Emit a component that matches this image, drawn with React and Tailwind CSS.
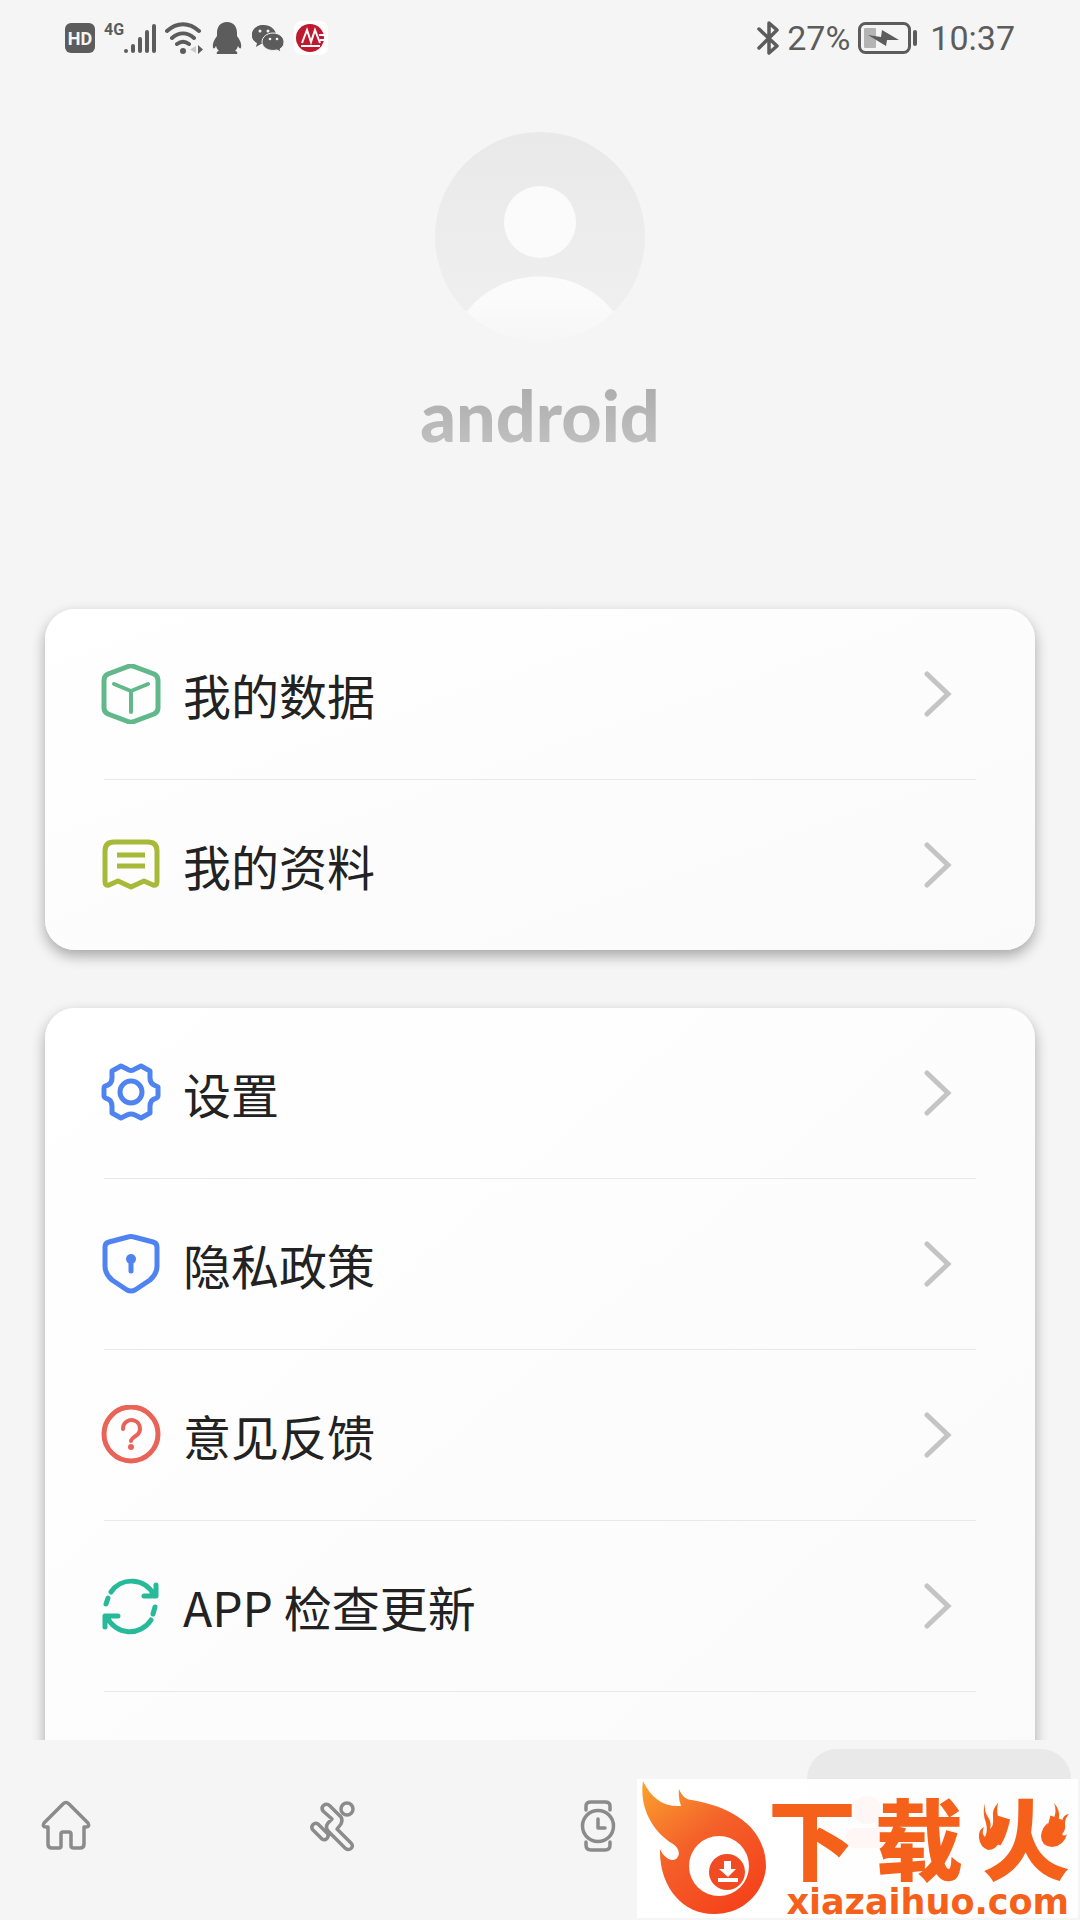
const FONT = "font-['Noto_Sans_CJK_SC',sans-serif]";

function StatusBar() {
  return (
    <header className="flex h-[76px] shrink-0 items-center justify-between px-[65px] text-[#5c5c5c]">
      <div className="flex items-center gap-[9px]">
        <span className="flex h-[30px] w-[30px] items-center justify-center rounded-md bg-[#5c5c5c] font-['Roboto',sans-serif] text-[18px] font-bold text-[#f5f5f5]">HD</span>
        <span className="flex items-center">
          <span className="mb-4 font-['Roboto',sans-serif] text-[16px] leading-4 font-bold">4G</span>
          <svg width="32" height="32" viewBox="1 0 32 32" stroke="currentColor" strokeWidth="4" strokeLinecap="round" aria-hidden="true">
            <path d="M3 29V29M10 29V24M17 29V17M24 29V10M31 29V4" />
          </svg>
        </span>
        <svg width="38" height="34" viewBox="0 0 38 34" fill="none" stroke="currentColor" strokeWidth="4" strokeLinecap="round" aria-hidden="true">
          <path d="M2 10C12 1 24 1 34 10M7 17C14 11 22 11 29 17M12 23C16 20 20 20 24 23" />
          <circle cx="18" cy="30" r="3" fill="currentColor" stroke="none" />
          <path d="M31 25v7l-6-3.500z" fill="#c9c9c9" stroke="none" />
          <path d="M33 24v9l5-4.500z" fill="currentColor" stroke="none" />
        </svg>
        <svg width="30" height="34" viewBox="0 0 30 34" fill="currentColor" aria-hidden="true">
          <path d="M15 1C8 1 5 6 5 12v3C2 19 0 23 1 27c1 1 2 0 3-2 1 3 2 4 3 5-2 0-3 2-2 3h20c1-1 0-3-2-3 1-1 2-2 3-5 1 2 2 3 3 2 1-4-1-8-4-12v-3C25 6 22 1 15 1z" />
        </svg>
        <svg width="34" height="30" viewBox="0 0 34 30" aria-hidden="true">
          <path d="M13 2C6 2 1 6 1 12c0 3 1 6 5 8l-1 4 5-3h4z" fill="currentColor" />
          <path d="M13 2c6 0 11 4 12 9L14 21C6 21 1 18 1 12 1 6 6 2 13 2z" fill="currentColor" />
          <path d="M22 10c6 0 11 4 11 9 0 3-1 5-4 7l1 3-4-2c-9 2-15-3-15-8s5-9 11-9z" fill="currentColor" stroke="#f5f5f5" strokeWidth="1" />
          <g fill="#f5f5f5"><circle cx="9" cy="8" r="1.500" /><circle cx="17" cy="8" r="1.500" /><circle cx="19" cy="16" r="1.300" /><circle cx="26" cy="16" r="1.300" /></g>
        </svg>
        <svg width="34" height="34" viewBox="0 0 34 34" aria-hidden="true">
          <rect width="34" height="34" rx="8" fill="#fff" />
          <circle cx="16" cy="17" r="14" fill="#c0182f" />
          <path d="M8 22L13 9l4 12 4-12 5 13M7 25h19M25 14h7M26 19h6" fill="none" stroke="#fff" strokeWidth="2" />
        </svg>
      </div>
      <div className="flex items-center font-['Roboto',sans-serif] text-[34px] leading-10">
        <svg width="22" height="36" viewBox="1 0 22 36" fill="none" stroke="currentColor" strokeWidth="3.500" strokeLinejoin="round" strokeLinecap="round" aria-hidden="true">
          <path d="M3 9l18 17-8 7V3l8 7L3 28" />
        </svg>
        <span className="ml-2">27%</span>
        <svg className="ml-2" width="60" height="32" viewBox="0 0 60 32" aria-hidden="true">
          <rect x="1.500" y="1.500" width="50" height="29" rx="6" fill="none" stroke="currentColor" strokeWidth="3" />
          <rect x="6" y="6" width="12" height="20" rx="1" fill="#b4b4b4" />
          <path d="M10 13L23 15 24 8 41 18 29 18 28 24z" fill="currentColor" />
          <rect x="55" y="8" width="4" height="16" rx="2" fill="currentColor" />
        </svg>
        <time className="ml-3">10:37</time>
      </div>
    </header>
  );
}

function Avatar() {
  return (
    <svg width="212" height="212" viewBox="0 0 212 212" role="img" aria-label="avatar">
      <defs>
        <clipPath id="face"><circle cx="106" cy="106" r="105" /></clipPath>
        <linearGradient id="disc" x1="0" y1="0" x2="0" y2="1"><stop stopColor="#e9e9e9" /><stop offset="1" stopColor="#f0f0f0" /></linearGradient>
        <linearGradient id="body" x1="0" y1="0" x2="0" y2="1"><stop offset="0.300" stopColor="#fbfbfb" /><stop offset="1" stopColor="#f6f6f6" /></linearGradient>
      </defs>
      <g clipPath="url(#face)">
        <rect width="212" height="212" fill="url(#disc)" />
        <circle cx="106" cy="91" r="36" fill="#fbfbfb" />
        <path d="M25 192C60 130 152 130 187 192V212H25z" fill="url(#body)" />
      </g>
    </svg>
  );
}

const line = { fill: "none", strokeWidth: 5, strokeLinecap: "round", strokeLinejoin: "round" };
const navLine = { ...line, strokeWidth: 3.5, stroke: "currentColor" };

const icons = {
  box: (
    <g {...line} stroke="#60b88b">
      <path d="M27 2.500Q30 1 33 2.500L53 10Q57 12 57 16V44Q57 48 53 50L33 57.500Q30 59 27 57.500L7 50Q3 48 3 44V16Q3 12 7 10z" />
      <path d="M13 20l17 7 17-7M30 27v21" strokeWidth="4" />
    </g>
  ),
  note: (
    <g {...line} stroke="#a6b938">
      <path d="M4 16Q4 7 13 7H47Q56 7 56 16V47Q56 51 52 50L43 46 30 52 17 46 8 50Q4 51 4 47z" />
      <path d="M16 20h28M16 31h28" strokeLinecap="butt" />
    </g>
  ),
  gear: (
    <g {...line} stroke="#4f83f1">
      <path d="M20 3L26 6Q30 9 34 6L40 3 49 8V15Q49 20 53 22L57 24V33Q57 35 53 36 49 38 49 43V50L40 55 34 52Q30 50 26 52L20 55 11 50V43Q11 38 7 36 3 35 3 33V25Q3 23 7 22 11 20 11 15V8z" />
      <circle cx="30" cy="29" r="11" />
    </g>
  ),
  shield: (
    <g {...line} stroke="#4f83f1">
      <path d="M27 3Q30 2 33 3L52 8Q56 9 56 13V32Q56 40 49 46L34 56Q30 58 26 56L11 46Q4 40 4 32V13Q4 9 8 8z" />
      <circle cx="30" cy="25" r="5" fill="#4f83f1" stroke="none" />
      <path d="M30 26v11" />
    </g>
  ),
  question: (
    <g {...line} stroke="#e96357">
      <circle cx="30" cy="29" r="27" />
      <path d="M22 24a8.500 8.500 0 1 1 14 6Q30 34 30 36" strokeWidth="4" />
      <circle cx="30" cy="42" r="3" fill="#e96357" stroke="none" />
    </g>
  ),
  refresh: (
    <g {...line} stroke="#26ba9a">
      <path d="M10 16A25 25 0 0 1 53 19M43 20H55V9M50 44A25 25 0 0 1 6 41M17 40H4V51M7 22l-2 6M54 31l-2 7" />
    </g>
  ),
};

function Row({ icon, label }) {
  return (
    <li className="mx-[59px] border-b border-[#e9e9e9] last:border-b-0">
      <button type="button" className="flex h-[170px] w-full items-center pr-6 text-left">
        <svg width="60" height="60" viewBox="0 0 60 60" className="-ml-[3px] shrink-0" aria-hidden="true">{icons[icon]}</svg>
        <span className="ml-[22px] flex-1 text-[48px] leading-[64px] text-[#222]">{label}</span>
        <svg width="28" height="46" viewBox="0 0 28 46" fill="none" stroke="#c4c4c4" strokeWidth="5" strokeLinecap="round" aria-hidden="true"><path d="M3 3l21 20L3 43" /></svg>
      </button>
    </li>
  );
}

function Card({ children }) {
  return <ul className="rounded-[30px] bg-linear-to-br from-white to-[#fafafa] shadow-[0_6px_14px_rgba(0,0,0,0.32)]">{children}</ul>;
}

function Watermark() {
  return (
    <aside className="absolute right-[2px] bottom-[2px] h-[139px] w-[441px] bg-white/95 text-[#f5611a]">
      <svg className="absolute top-0 left-0" width="132" height="139" viewBox="0 0 132 139" aria-hidden="true">
        <defs>
          <linearGradient id="flame" x1="0" y1="0" x2="0.700" y2="1"><stop stopColor="#fba32e" /><stop offset="0.500" stopColor="#f4602a" /><stop offset="1" stopColor="#f5431b" /></linearGradient>
        </defs>
        <path d="M6 2C14 19 26 28 44 27Q41 19 42 10C45 17 49 21 55 21C95 28 129 48 129 88C127 114 106 135 78 135C47 136 22 109 23 70C27 79 34 83 39 80C44 76 42 69 36 65C16 53 2 29 6 2z" fill="url(#flame)" />
        <circle cx="82" cy="87" r="30" fill="#fff" />
        <circle cx="90" cy="93" r="18" fill="#f04b23" />
        <path d="M87 82h7v8h5l-8 8-9-8h5zM81 99h20v4H81z" fill="#fff" />
      </svg>
      <div className="ml-[131px] flex items-center justify-between pt-3 pr-2 text-[88px] leading-[88px] font-black">
        <span>下</span><span>载</span><span>火</span>
      </div>
      <svg className="absolute top-6 right-2" width="92" height="52" viewBox="0 0 92 52" fill="currentColor" aria-hidden="true">
        <path d="M7 0Q6 9 10 14 14 20 12 26 16 23 15 14 14 6 20 0 18 9 21 17 26 28 22 38 18 47 10 47 2 44 1 35 0 27 6 24 3 31 7 34 10 28 8 20 4 10 7 0z" />
        <path d="M76 0Q82 7 81 14 81 19 78 25 82 25 84 18 85 12 91 11 87 15 87 21 88 27 84 31 86 34 89 31 86 43 74 44 63 43 63 33 64 24 70 20 69 27 73 27 72 21 76 15 79 8 76 0z" />
      </svg>
      <p className="absolute right-[9px] bottom-0 font-['DejaVu_Sans',sans-serif] text-[35px] leading-8 font-bold">xiazaihuo.com</p>
    </aside>
  );
}

function NavBar() {
  return (
    <nav className="relative grid h-[180px] shrink-0 grid-cols-[266fr_266fr_241fr_264fr] items-start bg-[#f5f5f5] pr-[9px] pl-[34px] text-[#8b8b8b]">
      <button type="button" aria-label="首页" className="mt-[54px] h-16 w-16">
        <svg width="64" height="64" viewBox="0 0 64 64" {...navLine}><path d="M29 10Q32 7 35 10L54 29Q56 33 52 33H50V50Q50 54 46 54H40Q37 54 37 52V40Q37 38 35 38H29Q27 38 27 40V52Q27 54 25 54H18Q14 54 14 50V33H12Q8 33 10 29z" /></svg>
      </button>
      <button type="button" aria-label="运动" className="mt-[54px] h-16 w-16">
        <svg width="64" height="64" viewBox="0 0 64 64" {...navLine}><circle cx="47" cy="15" r="6" /><path d="M23 17C20 12 26 8 30 12L41 23Q43 26 41 30L37 35 51 49C55 53 49 58 45 54L28 37Q25 33 28 29L32 25zM12.500 35.500A4 4 0 0 1 18 30L27.500 39.500A4 4 0 0 1 22 45z" /></svg>
      </button>
      <button type="button" aria-label="设备" className="mt-[54px] h-16 w-16">
        <svg width="64" height="64" viewBox="0 0 64 64" {...navLine}><circle cx="32" cy="32" r="15.500" /><path d="M20 16V12Q20 8 25 8H39Q44 8 44 12V16M20 48V51Q20 56 25 56H39Q44 56 44 51V48M32 25V34H39" /></svg>
      </button>
      <button type="button" aria-label="我的" className="mt-[9px] h-[150px] rounded-[30px] bg-[#e9e9e9]">
        <svg className="ml-9" width="48" height="60" viewBox="0 0 48 60" fill="#ee5a4c" aria-hidden="true"><circle cx="24" cy="16" r="14" /><rect x="2" y="34" width="44" height="20" rx="10" /></svg>
      </button>
      <Watermark />
    </nav>
  );
}

export default function App() {
  return (
    <div className={`flex h-screen flex-col overflow-hidden bg-[#f5f5f5] ${FONT}`}>
      <StatusBar />
      <main className="min-h-0 flex-1 overflow-hidden">
        <section className="flex h-[533px] flex-col items-center pt-[55px]">
          <Avatar />
          <h1 className="mt-[30px] bg-linear-to-b from-[#a8a8a8] to-[#c4c4c4] bg-clip-text font-['Lato',sans-serif] text-[70px] leading-[84px] font-black text-transparent">android</h1>
        </section>
        <div className="flex flex-col gap-[58px] px-[45px]">
          <Card>
            <Row icon="box" label="我的数据" />
            <Row icon="note" label="我的资料" />
          </Card>
          <Card>
            <Row icon="gear" label="设置" />
            <Row icon="shield" label="隐私政策" />
            <Row icon="question" label="意见反馈" />
            <Row icon="refresh" label="APP 检查更新" />
            <li className="h-[170px]" />
          </Card>
        </div>
      </main>
      <NavBar />
    </div>
  );
}
